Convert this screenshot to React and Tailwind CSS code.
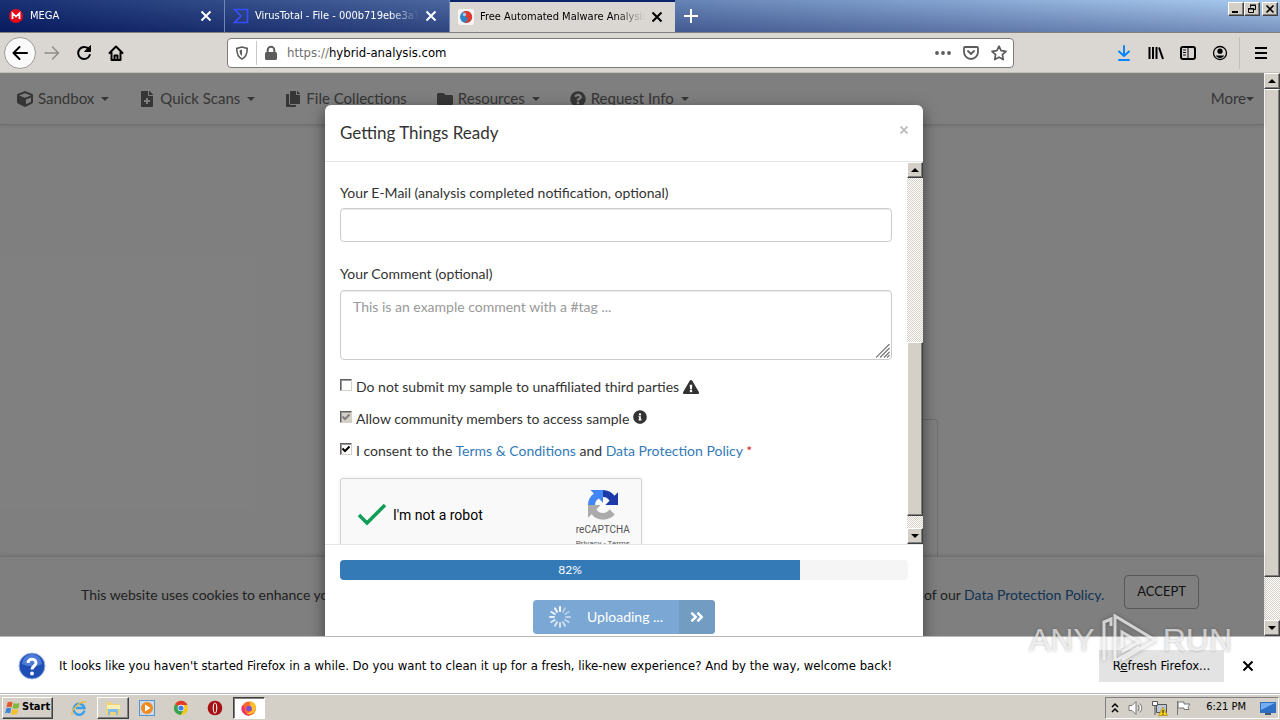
import React from "react";
import {
  FaCube,
  FaFileMedical,
  FaCopy,
  FaFolder,
  FaQuestionCircle,
  FaExclamationTriangle,
  FaInfoCircle,
  FaAngleDoubleRight,
} from "react-icons/fa";

const CHROME_FONT = "font-['DejaVu_Sans_Condensed','DejaVu_Sans',sans-serif]";
const SITE_FONT = "font-[Lato,sans-serif]";
const RAISED =
  "border border-t-white border-l-white border-r-[#404040] border-b-[#404040] bg-[#d4d0c8] shadow-[inset_-1px_-1px_0_#808080]";

function Cross({ className = "" }) {
  return (
    <svg viewBox="0 0 12 12" className={`size-3 ${className}`} fill="none" stroke="currentColor" strokeWidth="2">
      <path d="M1.5 1.5l9 9M10.5 1.5l-9 9" />
    </svg>
  );
}

function Tab({ icon, title, active }) {
  return (
    <div
      className={`flex w-[225px] items-center gap-1.5 pl-2 pr-3 ${
        active
          ? "border-t-2 border-t-[#0a246a] bg-[#dad7d2] text-black"
          : "border-r border-r-[#6f86b8] text-white"
      }`}
    >
      {icon}
      <span className="min-w-0 flex-1 overflow-hidden whitespace-nowrap text-[11px] [mask-image:linear-gradient(to_right,black_82%,transparent)]">
        {title}
      </span>
      <button type="button" aria-label={`Close ${title}`}>
        <Cross />
      </button>
    </div>
  );
}

const megaIcon = (
  <svg viewBox="0 0 16 16" className="size-4 shrink-0">
    <circle cx="8" cy="8" r="7" fill="#e30b1c" />
    <path d="M4.5 11V5.2L8 8.6l3.500-3.400V11" fill="none" stroke="#fff" strokeWidth="1.700" />
  </svg>
);
const virusIcon = (
  <svg viewBox="0 0 16 16" className="size-4 shrink-0" fill="none" stroke="#394eff" strokeWidth="1.600">
    <path d="M1.500 1.500h13v13h-13L8 8z" />
  </svg>
);
const hybridIcon = (
  <svg viewBox="0 0 16 16" className="size-4 shrink-0">
    <rect width="16" height="16" rx="2" fill="#f4f4f4" />
    <circle cx="8" cy="8" r="6" fill="#2a86c8" />
    <path d="M8 2a6 6 0 0 1 5 9.500C11 14 8 14.500 6 13c3 0 4-2 3-4S5 7 5 5s1.500-3 3-3z" fill="#e0392d" />
    <circle cx="6.500" cy="5.500" r="1.700" fill="#9fd4f5" />
  </svg>
);

function ToolButton({ label, children, className = "" }) {
  return (
    <button type="button" aria-label={label} className={`grid size-8 shrink-0 place-items-center ${className}`}>
      <svg viewBox="0 0 16 16" className="size-4" fill="none" stroke="currentColor" strokeWidth="2" strokeLinecap="round" strokeLinejoin="round">
        {children}
      </svg>
    </button>
  );
}

function TabBar() {
  return (
    <header className="flex h-[33px] shrink-0 items-stretch justify-between border-b border-[#808080] bg-[linear-gradient(to_bottom,rgba(255,255,255,0.06),rgba(0,0,60,0.28)),linear-gradient(to_right,#0a246a,#a6caf0)]">
      <div className="flex">
        <Tab icon={megaIcon} title="MEGA" />
        <Tab icon={virusIcon} title="VirusTotal - File - 000b719ebe3a17" />
        <Tab icon={hybridIcon} title="Free Automated Malware Analysis" active />
        <button type="button" aria-label="New tab" className="grid w-8 place-items-center text-white">
          <svg viewBox="0 0 14 14" className="size-3.5" stroke="currentColor" strokeWidth="2">
            <path d="M7 0v14M0 7h14" />
          </svg>
        </button>
      </div>
      <div className="flex items-start pt-0.5 pr-0.5">
        <button type="button" aria-label="Minimize" className={`grid h-3.5 w-4 place-items-center ${RAISED}`}>
          <svg viewBox="0 0 10 10" className="size-2.5"><path d="M1 7h6v2H1z" /></svg>
        </button>
        <button type="button" aria-label="Restore" className={`grid h-3.5 w-4 place-items-center ${RAISED}`}>
          <svg viewBox="0 0 10 10" className="size-2.5" fill="none" stroke="#000">
            <path d="M3.500 3.500v-2h5v4h-2M3 1h6M1.500 4.500h5v4h-5zM1 5h6" />
          </svg>
        </button>
        <button type="button" aria-label="Close" className={`ml-0.5 grid h-3.5 w-4 place-items-center ${RAISED}`}>
          <svg viewBox="0 0 10 10" className="size-2.5" stroke="#000" strokeWidth="1.600"><path d="M1.500 1.500l7 7M8.500 1.500l-7 7" /></svg>
        </button>
      </div>
    </header>
  );
}

function Toolbar() {
  return (
    <div className="flex h-10 shrink-0 items-center border-b border-[#c4c1bb] bg-[#dad7d2] px-1 text-black">
      <ToolButton label="Back" className="rounded-full border border-[#9d9a95] bg-[#fafafa]">
        <path d="M15 8H2M7.500 2L1.500 8l6 6" />
      </ToolButton>
      <ToolButton label="Forward" className="text-[#8f8d89]">
        <path d="M1 8h13M8.500 2l6 6-6 6" strokeWidth="1.500" />
      </ToolButton>
      <ToolButton label="Reload">
        <path d="M13 4.500A6 6 0 1 0 13.800 10" />
        <path d="M14.500 1v5.500H9z" fill="currentColor" strokeWidth="1" />
      </ToolButton>
      <ToolButton label="Home">
        <path d="M1.500 8L8 1.500 14.500 8M3.500 7.500V15h9V7.500" />
        <path d="M6.500 14.500v-4h3v4" />
      </ToolButton>

      <div className="mr-[94px] ml-[95px] flex h-[30px] min-w-0 flex-1 items-center rounded-sm border border-[#7d7b77] bg-white text-[#5c5c5c]">
        <button type="button" aria-label="Tracking protection" className="grid w-7 place-items-center">
          <svg viewBox="0 0 16 16" className="size-3.5" fill="none" stroke="currentColor" strokeWidth="1.800">
            <path d="M8 1.200L2 2.800c0 6 1.500 10 6 12 4.500-2 6-6 6-12z" />
            <path d="M8 4v7.500C6 10 5.300 8 5.200 5z" fill="currentColor" stroke="none" />
          </svg>
        </button>
        <span className="h-6 w-px bg-[#c8c8c8]" />
        <button type="button" aria-label="Site information" className="grid w-7 place-items-center">
          <svg viewBox="0 0 16 16" className="size-4">
            <rect x="2" y="7" width="12" height="8" rx="1.500" fill="currentColor" />
            <path d="M4.700 8V5a3.300 3.300 0 0 1 6.600 0v3" fill="none" stroke="currentColor" strokeWidth="2" />
          </svg>
        </button>
        <label htmlFor="url" className="pl-0.5 text-[13px] text-[#6f6f6f]">https://</label>
        <input id="url" defaultValue="hybrid-analysis.com" className="min-w-0 flex-1 bg-transparent text-[13px] text-black outline-none" />
        <div className="flex items-center">
          <button type="button" aria-label="Page actions" className="grid w-7 place-items-center">
            <svg viewBox="0 0 16 16" className="size-4" fill="currentColor">
              <circle cx="2" cy="8" r="1.900" /><circle cx="8" cy="8" r="1.900" /><circle cx="14" cy="8" r="1.900" />
            </svg>
          </button>
          <button type="button" aria-label="Save to Pocket" className="grid w-7 place-items-center">
            <svg viewBox="0 0 16 16" className="size-4" fill="none" stroke="currentColor" strokeWidth="1.800" strokeLinecap="round" strokeLinejoin="round">
              <path d="M2 2h12a1 1 0 0 1 1 1v4A7 7 0 0 1 1 7V3a1 1 0 0 1 1-1zM5 6l3 3 3-3" />
            </svg>
          </button>
          <button type="button" aria-label="Bookmark" className="grid w-7 place-items-center">
            <svg viewBox="0 0 16 16" className="size-4" fill="none" stroke="currentColor" strokeWidth="1.700" strokeLinejoin="round">
              <path d="M8 1.200l2.100 4.500 4.900.6-3.600 3.400.9 4.900L8 12.200l-4.300 2.400.9-4.900L1 6.300l4.900-.6z" />
            </svg>
          </button>
        </div>
      </div>

      <ToolButton label="Downloads" className="text-[#0a84ff]">
        <path d="M8 1v9.500M3 6.500l5 4.500 5-4.500M3 15h10" />
      </ToolButton>
      <ToolButton label="Library">
        <path d="M1.500 2v12M5 2v12M8.500 2v12M11 2.500l4 11.500" strokeLinecap="butt" />
      </ToolButton>
      <ToolButton label="Sidebar">
        <rect x="1" y="2" width="14" height="12" rx="2" />
        <path d="M8 2v12M3.500 5h2M3.500 7.500h2M3.500 10h2" strokeWidth="1" />
      </ToolButton>
      <ToolButton label="Account">
        <circle cx="8" cy="8" r="6.500" strokeWidth="1.300" />
        <circle cx="8" cy="6.200" r="2.600" fill="currentColor" stroke="none" />
        <path d="M3.800 10.500h8.400C11.500 12 10 13 8 13s-3.500-1-4.200-2.500z" fill="currentColor" stroke="none" />
      </ToolButton>
      <span className="ml-[3px] h-8 w-px bg-[#c2bfb9]" />
      <ToolButton label="Menu" className="ml-[5px] mr-[-1px]">
        <path d="M2 3h12M2 8h12M2 13h12" strokeLinecap="butt" />
      </ToolButton>
    </div>
  );
}

function ScrollBar({ before, after }) {
  return (
    <div
      aria-hidden="true"
      className="flex w-4 shrink-0 flex-col bg-[#eae8e4] bg-[repeating-conic-gradient(#d4d0c8_0_25%,#ffffff_0_50%)] bg-size-[2px_2px]"
    >
      <div className={`grid h-4 shrink-0 place-items-center ${RAISED}`}>
        <svg viewBox="0 0 8 4" className="h-1 w-2"><path d="M4 0l4 4H0z" /></svg>
      </div>
      <div className={before} />
      <div className={`flex-1 ${RAISED}`} />
      <div className={after} />
      <div className={`grid h-4 shrink-0 place-items-center ${RAISED}`}>
        <svg viewBox="0 0 8 4" className="h-1 w-2"><path d="M4 4l4-4H0z" /></svg>
      </div>
    </div>
  );
}

const NAV = [
  { label: "Sandbox", icon: FaCube, caret: true },
  { label: "Quick Scans", icon: FaFileMedical, caret: true },
  { label: "File Collections", icon: FaCopy },
  { label: "Resources", icon: FaFolder, caret: true },
  { label: "Request Info", icon: FaQuestionCircle, caret: true },
];

function Caret({ className = "" }) {
  return <span className={`border-x-4 border-t-4 border-x-transparent border-t-current ${className}`} />;
}

function SiteNav() {
  return (
    <nav className="flex h-[52px] items-center justify-between border-b border-[#e0e0e0] pl-[17px] pr-2.5 text-[15px] text-[#6c6c6c] shadow-[0_1px_4px_rgba(0,0,0,0.12)]">
      <div className="flex gap-[30px]">
        {NAV.map(({ label, icon: Icon, caret }) => (
          <a key={label} href="#" className="flex items-center gap-[5px]">
            <Icon className="h-4 w-auto" />
            <span>{label}</span>
            {caret && <Caret className="ml-0.5" />}
          </a>
        ))}
      </div>
      <a href="#" className="flex items-center">
        More
        <Caret />
      </a>
    </nav>
  );
}

function CookieBar() {
  return (
    <div className="flex h-20 items-center justify-between border-t border-[#e2e2e2] pl-[81px] pr-[65px] pb-1 text-sm text-[#444] shadow-[0_-1px_4px_rgba(0,0,0,0.12)]">
      <p>This website uses cookies to enhance your</p>
      <div className="flex items-center gap-5">
        <p>
          of our <a href="#" className="text-[#2467a6]">Data Protection Policy.</a>
        </p>
        <button type="button" className="mb-1.5 h-[34px] rounded border border-[#b0b0b0] px-3 text-[13px] text-[#222]">
          ACCEPT
        </button>
      </div>
    </div>
  );
}

function CheckRow({ id, checked, disabled, children }) {
  return (
    <div className="flex h-5 items-center gap-1">
      <span className="mb-1 grid size-3 place-items-center">
        <input
          id={id}
          type="checkbox"
          defaultChecked={checked}
          disabled={disabled}
          className={`peer col-start-1 row-start-1 size-3 appearance-none border border-t-[#606060] border-l-[#606060] border-r-[#d4d0c8] border-b-[#d4d0c8] shadow-[inset_1px_1px_0_#9a9a9a] ${
            disabled ? "bg-[#d4d0c8]" : "bg-white"
          }`}
        />
        <svg
          viewBox="0 0 8 8"
          className={`pointer-events-none invisible col-start-1 row-start-1 size-2 peer-checked:visible ${disabled ? "text-[#808080]" : "text-black"}`}
          fill="none"
          stroke="currentColor"
          strokeWidth="2"
        >
          <path d="M.5 3.500L3 6l4.500-4.500" />
        </svg>
      </span>
      <label htmlFor={id} className="whitespace-nowrap">{children}</label>
    </div>
  );
}

function Captcha() {
  return (
    <div className="mt-[17px] flex h-[78px] w-[302px] shrink-0 justify-between rounded-[3px] border border-[#d3d3d3] bg-[#f9f9f9] pl-4 pr-[11px] font-[Roboto,sans-serif] shadow-[0_0_4px_rgba(0,0,0,0.08)]">
      <div className="flex items-center gap-1.5 pb-1 text-sm text-black">
        <svg viewBox="0 0 30 24" className="h-6 w-[30px]" fill="none" stroke="#0f9d58" strokeWidth="3.500">
          <path d="M2 12l8 8L28 2" />
        </svg>
        I'm not a robot
      </div>
      <div className="flex flex-col items-center pt-[11px] text-[#555]">
        <svg viewBox="0 0 64 64" className="size-[30px]">
          <path d="M64 32V5l-7.500 7.500A32 32 0 0 0 32 0v15c7 0 11 3 14 8l-9 9z" fill="#1c3aa9" />
          <path d="M32 0H5l7.500 7.500A32 32 0 0 0 0 32h15c0-7 3-11 8-14l9 9z" fill="#4285f4" />
          <path d="M0 32v27l7.500-7.500A32 32 0 0 0 57 52L46 41c-3 5-8 8-14 8-7 0-11-3-14-8l9-9z" fill="#ababab" />
        </svg>
        <span className="text-[10px] leading-5">reCAPTCHA</span>
        <span className="text-[8px] leading-[7px]">Privacy - Terms</span>
      </div>
    </div>
  );
}

const SPOKES = Array.from({ length: 12 }, (_, i) => i);

function UploadDialog() {
  return (
    <section
      role="dialog"
      aria-label="Getting Things Ready"
      className="mt-8 flex w-[598px] flex-col rounded-md bg-white text-[#333] shadow-[0_5px_15px_rgba(0,0,0,0.5)]"
    >
      <div className="flex h-[57px] shrink-0 items-center justify-between border-b border-[#e5e5e5] px-[15px]">
        <h1 className="text-[17px]">Getting Things Ready</h1>
        <button type="button" aria-label="Close dialog" className="mb-1.5 text-[#bbb]">
          <svg viewBox="0 0 8 8" className="size-2" stroke="currentColor" strokeWidth="1.800"><path d="M.5.500l7 7M7.500.500l-7 7" /></svg>
        </button>
      </div>

      <div className="flex h-[382px] shrink-0 overflow-hidden text-sm">
        <form className="flex min-w-0 flex-1 flex-col overflow-hidden px-[15px] pt-[21px]">
          <label htmlFor="email" className="mb-[5px] leading-5">
            Your E-Mail (analysis completed notification, optional)
          </label>
          <input id="email" type="email" className="h-[34px] shrink-0 rounded border border-[#ccc] px-3 shadow-[inset_0_1px_1px_rgba(0,0,0,0.08)]" />
          <label htmlFor="comment" className="mt-[22px] mb-1.5 leading-5">Your Comment (optional)</label>
          <div className="relative flex h-[70px] shrink-0">
            <textarea
              id="comment"
              placeholder="This is an example comment with a #tag ..."
              className="flex-1 resize-none rounded border border-[#ccc] px-3 py-1.5 leading-5 shadow-[inset_0_1px_1px_rgba(0,0,0,0.08)] placeholder:text-[#999]"
            />
            <svg viewBox="0 0 14 14" className="pointer-events-none absolute right-0.5 bottom-0.5 size-3.5" stroke="#777" strokeWidth="1.200">
              <path d="M0 13.500L13.500 0M4 13.500L13.500 4M8 13.500L13.500 8M11 13.500l2.500-2.500" />
            </svg>
          </div>
          <div className="mt-[17px] flex flex-col gap-3">
            <CheckRow id="private">
              Do not submit my sample to unaffiliated third parties{" "}
              <FaExclamationTriangle className="inline-block size-4 align-text-bottom" />
            </CheckRow>
            <CheckRow id="community" checked disabled>
              Allow community members to access sample{" "}
              <FaInfoCircle className="inline-block size-3.5 align-text-top" />
            </CheckRow>
            <CheckRow id="consent" checked>
              I consent to the <a href="#" className="text-[#337ab7]">Terms &amp; Conditions</a> and{" "}
              <a href="#" className="text-[#337ab7]">Data Protection Policy</a>{" "}
              <span className="text-[#d02020]">*</span>
            </CheckRow>
          </div>
          <Captcha />
        </form>
        <ScrollBar before="h-[164px] shrink-0" after="h-3 shrink-0" />
      </div>

      <div className="flex flex-col items-center gap-5 border-t border-[#e5e5e5] p-[15px]">
        <div className="h-5 w-full overflow-hidden rounded bg-[#f5f5f5]">
          <div
            role="progressbar"
            aria-valuenow={82}
            className="h-full w-[81%] bg-[#337ab7] text-center text-xs leading-5 text-white"
          >
            82%
          </div>
        </div>
        <button type="button" disabled className="flex h-[34px] overflow-hidden rounded bg-[#7aa7d3] text-sm text-white">
          <span className="flex h-full items-center gap-4 px-4">
            <svg viewBox="0 0 22 22" className="size-[22px]" stroke="#fff" strokeWidth="2" strokeLinecap="round">
              {SPOKES.map((i) => (
                <path key={i} d="M11 1v4" opacity={1 - i * 0.055} transform={`rotate(${-i * 30} 11 11)`} />
              ))}
            </svg>
            Uploading ...
          </span>
          <span className="grid h-full w-9 place-items-center bg-[#729cc2]">
            <FaAngleDoubleRight className="size-4" />
          </span>
        </button>
      </div>
    </section>
  );
}

function Page() {
  return (
    <div className={`flex min-h-0 flex-1 overflow-hidden bg-white ${SITE_FONT}`}>
      <main className="relative flex min-w-0 flex-1 flex-col">
        <SiteNav />
        <div className="flex min-h-0 flex-1 items-end px-[326px]">
          <div className="h-[137px] flex-1 rounded-tr border border-b-0 border-[#dcdcdc]" />
        </div>
        <CookieBar />
        <div className="absolute inset-0 flex items-start justify-center overflow-hidden bg-black/50 pr-4">
          <UploadDialog />
        </div>
      </main>
      <ScrollBar before="" after="h-[43px] shrink-0" />
    </div>
  );
}

function RefreshNotice() {
  return (
    <aside className="flex h-[58px] shrink-0 items-center border-t border-[#b8b8b8] bg-white pl-[18px] pr-[26px] text-[13px] text-black">
      <svg viewBox="0 0 28 28" className="size-7 shrink-0">
        <circle cx="14" cy="14" r="13" fill="#1f4fb4" stroke="#9db6e0" />
        <path d="M4 12a10 10 0 0 1 20 0c-6 3-14 3-20 0z" fill="#4b7bd6" />
        <path d="M10 11c0-5 8-5 8 0 0 3-4 3-4 6.500" fill="none" stroke="#fff" strokeWidth="3" />
        <circle cx="14" cy="21.500" r="1.900" fill="#fff" />
      </svg>
      <p className="ml-[13px] min-w-0 flex-1 truncate">
        It looks like you haven't started Firefox in a while. Do you want to clean it up for a fresh, like-new experience? And by the way, welcome back!
      </p>
      <button type="button" className="h-8 w-[125px] bg-[#e3e3e3]">
        R<u>e</u>fresh Firefox...
      </button>
      <button type="button" aria-label="Dismiss" className="ml-[18px] grid place-items-center">
        <Cross />
      </button>
    </aside>
  );
}

function Watermark() {
  return (
    <div
      aria-label="ANY RUN"
      className="pointer-events-none absolute right-12 bottom-[54px] flex items-center gap-1.5 font-['Liberation_Sans',sans-serif] text-[32px] leading-none text-white/65 [text-shadow:0_0_3px_rgba(0,0,0,0.3)]"
    >
      <span>ANY</span>
      <svg viewBox="0 0 56 52" className="h-[52px] w-14 drop-shadow-[0_0_2px_rgba(0,0,0,0.4)]" fill="none" stroke="rgba(255,255,255,0.7)" strokeWidth="3">
        <path d="M3 46V8l7-3v7M14 47V2l40 24-33 20M14 47l24-14M21 34V18l17 10-17 10" />
      </svg>
      <span>RUN</span>
    </div>
  );
}

function TaskIcon({ label, className = "", children }) {
  return (
    <button type="button" aria-label={label} className={`grid h-[22px] w-8 place-items-center ${className}`}>
      <svg viewBox="0 0 16 16" className="size-4">{children}</svg>
    </button>
  );
}

function Taskbar() {
  return (
    <footer className="flex h-[26px] shrink-0 items-center justify-between border-t border-white bg-[#d4d0c8] pl-0.5 pr-px text-black shadow-[0_-1px_0_#b5b9c0]">
      <div className="flex items-center gap-0.5">
        <button type="button" className={`mr-2 flex h-[22px] items-center gap-px px-0.5 text-[11px] font-bold ${RAISED}`}>
          <svg viewBox="0 0 16 16" className="size-4">
            <path d="M2.500 2.500q2.500-1.500 5 0L6.500 7.500q-2.500-1.300-5 0z" fill="#e5562a" />
            <path d="M8.500 3q2.500 1.500 6 0L13.500 8q-3 1.400-6 0z" fill="#7db93a" />
            <path d="M1.300 8.500q2.500-1.300 5 0L5 13.500q-2.500-1.500-5 0z" fill="#3b87d6" />
            <path d="M7.300 9q3 1.400 6 0L12 14q-3 1.400-6 0z" fill="#f6bd2e" />
          </svg>
          Start
        </button>
        <TaskIcon label="Internet Explorer">
          <path d="M13.500 10.500A5.500 5.500 0 1 1 13.500 8H5" fill="none" stroke="#3aa0e8" strokeWidth="2.400" />
          <path d="M1.500 14.500C-1 12 9 0 15 2" fill="none" stroke="#f2b93b" strokeWidth="1.300" />
        </TaskIcon>
        <TaskIcon label="File Explorer" className={RAISED}>
          <path d="M1 2h5l1 2h8v11H1z" fill="#f0d27a" />
          <path d="M2 5h13v4H2z" fill="#fbeeb6" />
          <path d="M3 15V9h10v6h-2v-3H5v3z" fill="#7fbde6" />
        </TaskIcon>
        <TaskIcon label="Media Player">
          <rect x=".5" y=".5" width="15" height="15" fill="#c7dcf0" stroke="#5d93c7" />
          <circle cx="8" cy="8" r="6" fill="#f28a1e" />
          <path d="M6 4.500l5.500 3.500L6 11.500z" fill="#fff" />
        </TaskIcon>
        <TaskIcon label="Chrome">
          <circle cx="8" cy="8" r="7" fill="#f9c518" />
          <path d="M8 8L2 4.300A7 7 0 0 1 14.500 5H8z" fill="#e23b2e" />
          <path d="M8 8L2 4.300A7 7 0 0 0 7.500 15L11 9.500z" fill="#35a351" />
          <circle cx="8" cy="8" r="3.300" fill="#fff" />
          <circle cx="8" cy="8" r="2.600" fill="#3f7ee8" />
        </TaskIcon>
        <TaskIcon label="Opera">
          <circle cx="8" cy="8" r="7.300" fill="#a80f12" />
          <ellipse cx="8" cy="8" rx="2.300" ry="5.500" fill="#fff" />
          <ellipse cx="8" cy="8" rx="1.200" ry="4.800" fill="#a80f12" />
        </TaskIcon>
        <TaskIcon label="Firefox" className="border border-t-[#404040] border-l-[#404040] border-r-white border-b-white bg-white shadow-[inset_1px_1px_0_#808080]">
          <circle cx="8" cy="8.500" r="7" fill="#ff6a2a" />
          <path d="M9 1c5 1 7 5 5.500 9S8 15 5 13c5 0 8-3 4-7z" fill="#ffc02e" />
          <path d="M1.500 5A7 7 0 0 0 9 15.500C5 14 3 11 4 8z" fill="#f0356a" />
          <circle cx="8" cy="8.500" r="2.800" fill="#7a4fd6" />
        </TaskIcon>
      </div>
      <div className="flex h-[22px] items-center gap-2 border border-t-[#808080] border-l-[#808080] border-r-white border-b-white pl-1 pr-0.5 text-[11px]">
        <svg viewBox="0 0 10 12" className="h-3 w-2.5" fill="none" stroke="#000" strokeWidth="1.500">
          <path d="M2 5l3-3 3 3M2 10l3-3 3 3" />
        </svg>
        <svg viewBox="0 0 16 16" className="size-4" fill="#fff" stroke="#777">
          <path d="M1 5.500h3l4-4v13l-4-4H1zM10 5q2 3 0 6M12 3.500q3.500 4.500 0 9" />
        </svg>
        <svg viewBox="0 0 16 16" className="size-4">
          <path d="M4.500 4.500h10v8h-10z" fill="#bcc9d6" stroke="#555" />
          <path d="M.5 1.500h5v4h-5zM3 5v10" fill="#fff" stroke="#555" />
          <path d="M11 7l4.500 8.500h-9z" fill="#ffd21a" stroke="#a07800" strokeWidth=".6" />
          <path d="M11 10v3M11 13.800v1" stroke="#000" />
        </svg>
        <svg viewBox="0 0 16 16" className="size-4" fill="#fff" stroke="#777">
          <path d="M1.500 1v14M2 2h6v2h6l-2 3 1 2.500H8V8H2z" />
        </svg>
        <time className="px-1.5">6:21 PM</time>
        <svg viewBox="0 0 16 14" className="h-3.5 w-4">
          <path d="M0 1h16v11H0z" fill="#2f6fc4" />
          <path d="M1 2h14L1 9z" fill="#72aef0" />
          <path d="M5 12h6v2H5z" fill="#4a5a70" />
        </svg>
      </div>
    </footer>
  );
}

export default function App() {
  return (
    <div className={`relative flex h-screen flex-col overflow-hidden ${CHROME_FONT}`}>
      <TabBar />
      <Toolbar />
      <Page />
      <RefreshNotice />
      <Taskbar />
      <Watermark />
    </div>
  );
}
